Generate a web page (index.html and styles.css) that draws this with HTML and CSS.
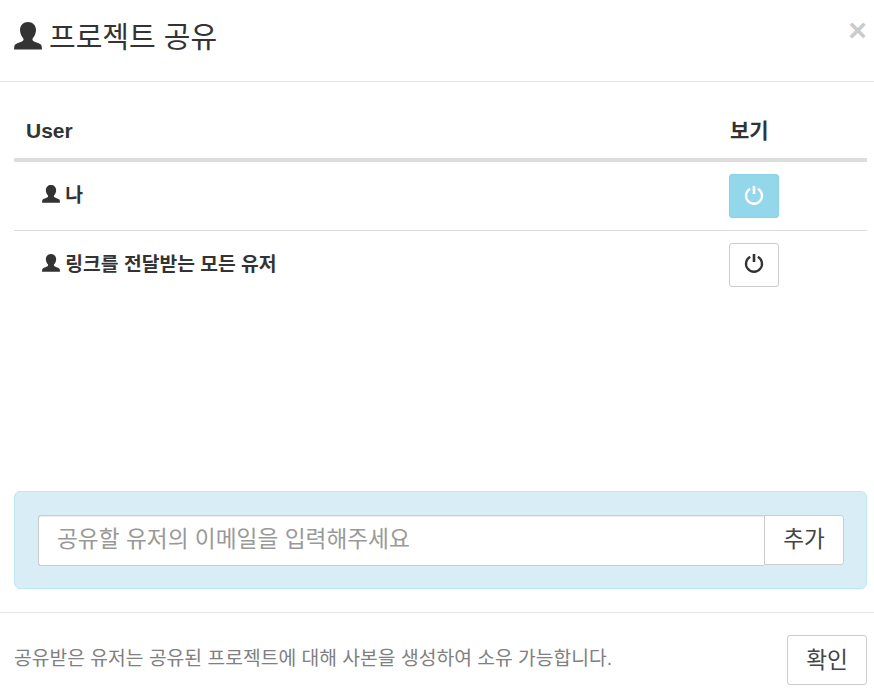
FILE: index.html
```html
<!DOCTYPE html>
<html lang="ko">
<head>
<meta charset="utf-8">
<title>프로젝트 공유</title>
<link rel="stylesheet" href="styles.css">
</head>
<body>
<svg class="defs" width="0" height="0" aria-hidden="true">
  <symbol id="user" viewBox="0 0 28 28">
    <path d="M14 0c-4.500 0-8 3.200-8 7.800 0 3.200 1.200 6.200 3 8.200.8.900.7 2-.1 2.800-1 1-2.800 1.600-5 2.300C1.500 21.900.5 23 .3 24.500L0 27.500h28l-.3-3c-.2-1.500-1.200-2.600-3.600-3.400-2.200-.7-4-1.300-5-2.300-.8-.8-.9-1.900-.1-2.800 1.800-2 3-5 3-8.200C22 3.200 18.500 0 14 0z"/>
  </symbol>
  <symbol id="power" viewBox="0 0 20 20">
    <path d="M6.200 3.700A8 8 0 1 0 13.800 3.700" fill="none" stroke="currentColor" stroke-width="2.300"/>
    <path d="M10 1v8" fill="none" stroke="currentColor" stroke-width="2.600"/>
  </symbol>
</svg>
<div class="modal">
  <header class="modal-header">
    <h4 class="modal-title"><svg class="icon-title"><use href="#user"/></svg>프로젝트 공유</h4>
    <button class="close" type="button">×</button>
  </header>
  <main class="modal-body">
    <table class="share-table">
      <thead>
        <tr><th class="col-user">User</th><th class="col-view">보기</th></tr>
      </thead>
      <tbody>
        <tr>
          <td class="cell-user"><svg class="icon-row"><use href="#user"/></svg> 나</td>
          <td class="cell-view"><button class="toggle on" type="button"><svg class="icon-power"><use href="#power"/></svg></button></td>
        </tr>
        <tr>
          <td class="cell-user"><svg class="icon-row"><use href="#user"/></svg> 링크를 전달받는 모든 유저</td>
          <td class="cell-view"><button class="toggle" type="button"><svg class="icon-power"><use href="#power"/></svg></button></td>
        </tr>
      </tbody>
    </table>
    <div class="add-box">
      <div class="input-group">
        <input class="email" type="text" placeholder="공유할 유저의 이메일을 입력해주세요">
        <button class="add" type="button">추가</button>
      </div>
    </div>
  </main>
  <footer class="modal-footer">
    <p class="note">공유받은 유저는 공유된 프로젝트에 대해 사본을 생성하여 소유 가능합니다.</p>
    <button class="confirm" type="button">확인</button>
  </footer>
</div>
</body>
</html>
```
FILE: styles.css
```css
* { box-sizing: border-box; }
html, body { margin: 0; height: 100%; background: #fff; }
body { font-family: "Liberation Sans", "Noto Sans CJK KR", sans-serif; color: #333; overflow: hidden; }
.defs { position: absolute; }
.modal { height: 699px; display: flex; flex-direction: column; }
.modal-header { height: 82px; border-bottom: 1px solid #e5e5e5; padding: 0 0 0 14px; position: relative; }
.modal-title { margin: 0; font-size: 29px; font-weight: 400; line-height: 77px; display: flex; align-items: center; gap: 7px; white-space: pre; }
.icon-title { width: 28px; height: 28px; fill: #333; margin-top: -5px; }
.close { position: absolute; top: 15px; right: 7px; border: 0; background: none; padding: 0; font-family: "Liberation Sans", sans-serif; font-size: 32px; line-height: 30px; font-weight: 700; color: #000; opacity: .2; }
.modal-body { flex: 1; padding: 20px 7px 23px 14px; display: flex; flex-direction: column; justify-content: space-between; }
.share-table { width: 100%; border-collapse: collapse; }
.share-table th { text-align: left; font-size: 21px; line-height: 28px; padding: 14px 12px 12px; border-bottom: 4px solid #ddd; font-weight: 700; height: 58px; }
.share-table th.col-view { width: 150px; padding-left: 13px; padding-right: 0; }
.cell-user { font-size: 19.3px; font-weight: 700; padding: 0 0 0 28px; vertical-align: top; line-height: 26px; }
.share-table td { height: 69px; border-top: 1px solid #ddd; padding-top: 21px; }
.share-table tr:first-child td { border-top: 0; height: 70px; padding-top: 21px; }
.share-table td.cell-view { padding: 12px 0 0 12px; vertical-align: top; }
.share-table tr:first-child td.cell-view { padding-top: 12px; }
.icon-row { width: 18px; height: 18px; fill: #333; vertical-align: -1px; }
.toggle { width: 50px; height: 44px; background: #fff; border: 1px solid #ccc; border-radius: 3px; padding: 0; color: #333; display: flex; align-items: center; justify-content: center; }
.toggle.on { background: #93d7eb; border-color: #8ad0e6; color: #fff; }
.icon-power { width: 20px; height: 20px; margin-top: -3px; }
.add-box { height: 98px; background: #d9edf7; border: 1px solid #bce8f1; border-radius: 6px; padding: 23px 22px 0 23px; }
.input-group { display: flex; align-items: flex-start; }
.email { flex: 1; height: 51px; min-width: 0; border: 1px solid #ccc; border-right: 0; border-radius: 3px 0 0 3px; padding: 0 0 2px 18px; font: 22.7px "Liberation Sans", "Noto Sans CJK KR", sans-serif; color: #555; box-shadow: inset 0 1px 1px rgba(0,0,0,.075); outline: 0; }
.email::placeholder { color: #999; opacity: 1; }
.add { width: 80px; height: 50px; background: #fff; border: 1px solid #ccc; border-radius: 0 3px 3px 0; font: 22.7px "Liberation Sans", "Noto Sans CJK KR", sans-serif; color: #444; padding: 0 0 5px; }
.modal-footer { height: 87px; border-top: 1px solid #e5e5e5; padding: 22px 7px 0 14px; display: flex; justify-content: space-between; align-items: flex-start; }
.note { margin: 0; font-size: 19.3px; line-height: 48px; color: #808080; }
.confirm { width: 80px; height: 50px; background: #fff; border: 1px solid #ccc; border-radius: 3px; font: 22.7px "Liberation Sans", "Noto Sans CJK KR", sans-serif; color: #444; padding: 0 0 4px; }
```
